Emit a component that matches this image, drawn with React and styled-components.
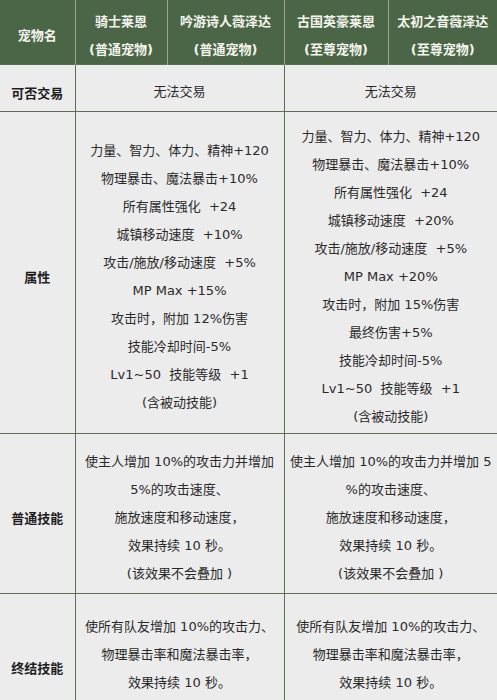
import styled, { createGlobalStyle } from 'styled-components';

const GlobalStyle = createGlobalStyle`
  html, body {
    margin: 0;
    padding: 0;
    background: #ececec;
  }
  body {
    font-family: "DejaVu Sans", "Noto Sans CJK SC", sans-serif;
  }
`;

const colWidths = [75, 92, 117, 104, 109];

const pets = [
  { name: '骑士莱恩', tier: '(普通宠物)' },
  { name: '吟游诗人薇泽达', tier: '(普通宠物)' },
  { name: '古国英豪莱恩', tier: '(至尊宠物)' },
  { name: '太初之音薇泽达', tier: '(至尊宠物)' },
];

const rows = [
  {
    label: '可否交易',
    height: 47,
    left: ['无法交易'],
    right: ['无法交易'],
  },
  {
    label: '属性',
    height: 322,
    left: [
      '力量、智力、体力、精神+120',
      '物理暴击、魔法暴击+10%',
      '所有属性强化  +24',
      '城镇移动速度  +10%',
      '攻击/施放/移动速度  +5%',
      'MP Max +15%',
      '攻击时，附加 12%伤害',
      '技能冷却时间-5%',
      'Lv1~50  技能等级  +1',
      '(含被动技能)',
    ],
    right: [
      '力量、智力、体力、精神+120',
      '物理暴击、魔法暴击+10%',
      '所有属性强化  +24',
      '城镇移动速度  +20%',
      '攻击/施放/移动速度  +5%',
      'MP Max +20%',
      '攻击时，附加 15%伤害',
      '最终伤害+5%',
      '技能冷却时间-5%',
      'Lv1~50  技能等级  +1',
      '(含被动技能)',
    ],
  },
  {
    label: '普通技能',
    height: 160,
    left: [
      '使主人增加 10%的攻击力并增加',
      '5%的攻击速度、',
      '施放速度和移动速度，',
      '效果持续 10 秒。',
      '(该效果不会叠加 )',
    ],
    right: [
      '使主人增加 10%的攻击力并增加 5',
      '%的攻击速度、',
      '施放速度和移动速度，',
      '效果持续 10 秒。',
      '(该效果不会叠加 )',
    ],
  },
  {
    label: '终结技能',
    height: 140,
    top: 19,
    left: ['使所有队友增加 10%的攻击力、', '物理暴击率和魔法暴击率，', '效果持续 10 秒。'],
    right: ['使所有队友增加 10%的攻击力、', '物理暴击率和魔法暴击率，', '效果持续 10 秒。'],
  },
];

const Table = styled.table`
  width: 497px;
  border-collapse: collapse;
  table-layout: fixed;
  background: #ececec;
`;

const Col = styled.col`
  width: ${(p) => p.$w}px;
`;

const HeadRow = styled.tr`
  height: 64px;
  background: #4b6646;
`;

const HeadCell = styled.th`
  color: #f4f4ee;
  font-size: 13px;
  font-weight: bold;
  line-height: 28px;
  text-align: center;
  vertical-align: middle;
  padding: 8px 0 0;
  border-left: 1px solid #98a690;
  white-space: nowrap;
  &:first-child {
    border-left: none;
  }
`;

const Row = styled.tr`
  height: ${(p) => p.$h}px;
  border-top: 1px solid #5e6e58;
`;

const Label = styled.td`
  color: #1e1e1e;
  font-size: 13px;
  font-weight: bold;
  text-align: center;
  vertical-align: middle;
  padding: 8px 0 0;
  border-right: 1px solid #5e6e58;
`;

const Cell = styled.td`
  color: #2a2a2a;
  font-size: 13px;
  text-align: center;
  vertical-align: ${(p) => (p.$top ? 'top' : 'middle')};
  padding: ${(p) => (p.$top ? p.$top : 8)}px 0 0;
  border-right: 1px solid #5e6e58;
  &:last-child {
    border-right: none;
  }
`;

const Line = styled.div`
  line-height: 28px;
  white-space: pre;
`;

const Lines = ({ items }) => items.map((t, i) => <Line key={i}>{t}</Line>);

export default function App() {
  return (
    <>
      <GlobalStyle />
      <Table>
        <colgroup>
          {colWidths.map((w, i) => (
            <Col key={i} $w={w} />
          ))}
        </colgroup>
        <thead>
          <HeadRow>
            <HeadCell>宠物名</HeadCell>
            {pets.map((p) => (
              <HeadCell key={p.name}>
                <div>{p.name}</div>
                <div>{p.tier}</div>
              </HeadCell>
            ))}
          </HeadRow>
        </thead>
        <tbody>
          {rows.map((r) => (
            <Row key={r.label} $h={r.height}>
              <Label>{r.label}</Label>
              <Cell colSpan={2} $top={r.top}>
                <Lines items={r.left} />
              </Cell>
              <Cell colSpan={2} $top={r.top}>
                <Lines items={r.right} />
              </Cell>
            </Row>
          ))}
        </tbody>
      </Table>
    </>
  );
}
